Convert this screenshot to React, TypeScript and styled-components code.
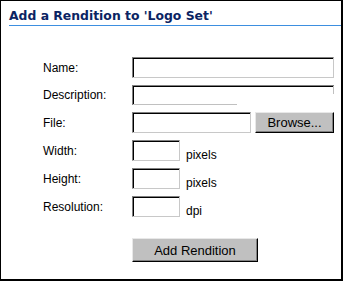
import React from 'react';
import styled, { createGlobalStyle } from 'styled-components';

const GlobalStyle = createGlobalStyle`
  html, body {
    margin: 0;
    padding: 0;
    background: #ffffff;
  }
  * {
    box-sizing: border-box;
  }
`;

const Frame = styled.div`
  width: 343px;
  height: 281px;
  background: #ffffff;
  border-style: solid;
  border-color: #000000;
  border-width: 1px 2px 2px 1px;
  font-family: 'Liberation Sans', Arial, sans-serif;
  font-size: 12px;
  color: #000000;
`;

const Header = styled.div`
  margin-left: 8px;
  padding-top: 7px;
  height: 25px;
  border-bottom: 1px solid #3d8fe0;
`;

const Title = styled.h1`
  margin: 0;
  font-family: 'DejaVu Sans', Verdana, sans-serif;
  font-size: 12.4px;
  line-height: 15px;
  font-weight: bold;
  color: #0b2463;
`;

const Form = styled.div`
  display: grid;
  grid-template-columns: 89px 1fr;
  row-gap: 7px;
  padding: 31px 8px 0 42px;
`;

const Label = styled.label`
  display: flex;
  align-items: center;
  white-space: nowrap;
`;

const Field = styled.div`
  display: flex;
  align-items: flex-end;
  gap: 4px;
`;

const TextBox = styled.div<{ $width: number; $height?: number }>`
  width: ${(p) => p.$width}px;
  height: ${(p) => p.$height ?? 21}px;
  background: #ffffff;
  border-style: solid;
  border-width: 1px;
  border-color: #808080 #c8c8c8 #c8c8c8 #808080;
  box-shadow: inset 1px 1px 0 #000000;
`;

const TextArea = styled.div`
  position: relative;
  width: 202px;
  height: 20px;
  background: #ffffff;
  border-top: 1px solid #808080;
  border-left: 1px solid #808080;
  box-shadow: inset 1px 1px 0 #000000;

  &::before {
    content: '';
    position: absolute;
    right: 0;
    top: 0;
    width: 1px;
    height: 8px;
    background: #c0c0c0;
  }

  &::after {
    content: '';
    position: absolute;
    left: 0;
    bottom: 0;
    width: 104px;
    height: 1px;
    background: #c0c0c0;
  }
`;

const Unit = styled.span`
  line-height: 14px;
  margin-left: 2px;
  margin-bottom: -1px;
`;

const Button = styled.button<{ $width: number; $height: number }>`
  width: ${(p) => p.$width}px;
  height: ${(p) => p.$height}px;
  padding: 0;
  background: #c0c0c0;
  font-family: 'Liberation Sans', Arial, sans-serif;
  font-size: 13px;
  color: #000000;
  border-style: solid;
  border-width: 1px;
  border-color: #e8e8e8 #000000 #000000 #e8e8e8;
  box-shadow: inset -1px -1px 0 #808080;
  cursor: pointer;
`;

const SubmitRow = styled.div`
  grid-column: 2;
  margin-top: 14px;
`;

export default function App() {
  return (
    <>
      <GlobalStyle />
      <Frame>
        <Header>
          <Title>Add a Rendition to 'Logo Set'</Title>
        </Header>
        <Form>
          <Label>Name:</Label>
          <Field>
            <TextBox $width={202} />
          </Field>

          <Label>Description:</Label>
          <Field>
            <TextArea />
          </Field>

          <Label>File:</Label>
          <Field>
            <TextBox $width={119} />
            <Button $width={79} $height={21}>Browse...</Button>
          </Field>

          <Label>Width:</Label>
          <Field>
            <TextBox $width={48} />
            <Unit>pixels</Unit>
          </Field>

          <Label>Height:</Label>
          <Field>
            <TextBox $width={48} />
            <Unit>pixels</Unit>
          </Field>

          <Label>Resolution:</Label>
          <Field>
            <TextBox $width={48} />
            <Unit>dpi</Unit>
          </Field>

          <SubmitRow>
            <Button $width={126} $height={24}>Add Rendition</Button>
          </SubmitRow>
        </Form>
      </Frame>
    </>
  );
}
